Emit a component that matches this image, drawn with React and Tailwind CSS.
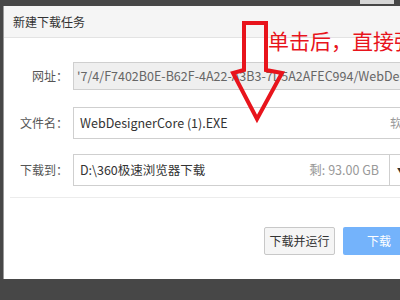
const FONT = { fontFamily: '"Noto Sans CJK SC", "Noto Sans", sans-serif' };

const Label = ({ children }) => (
  <div className="w-[64px] shrink-0 flex justify-end text-[12px] text-[#555]">
    <span>{children}</span>
    <span className="inline-block w-[12px]">：</span>
  </div>
);

const App = () => {
  return (
    <div className="relative w-[400px] h-[300px] overflow-hidden bg-[#474747]" style={FONT}>
      {/* strip of the window behind */}
      <div className="flex h-[6px]">
        <div className="ml-[360px] w-[34px] h-[4px] bg-[#d6d6d6]" />
      </div>

      {/* dialog */}
      <div className="ml-[3px] w-[440px] h-[273px] bg-white border-l border-[#9a9a9a] flex flex-col">
        <div className="h-[32px] shrink-0 bg-[#f5f5f5] border-b border-[#e3e3e3] flex items-center pl-[9px] text-[12px] text-[#333]">
          新建下载任务
        </div>

        <div className="flex flex-col pt-[24px]">
          <div className="flex items-center h-[28px]">
            <Label>网址</Label>
            <div className="ml-[5px] flex-1 h-[28px] border border-[#cfcfcf] bg-[#efefef] flex items-center pl-[3px] text-[12.5px] text-[#666] whitespace-nowrap overflow-hidden">
              '7/4/F7402B0E-B62F-4A22-A3B3-7D5A2AFEC994/WebDesignerCore (1).EXE
            </div>
          </div>

          <div className="flex items-center h-[32px] mt-[17px]">
            <Label>文件名</Label>
            <div className="ml-[5px] w-[360px] h-[32px] border border-[#cfcfcf] bg-white flex items-center pl-[6px] text-[12.5px] text-[#333] whitespace-nowrap">
              <span className="flex-1">WebDesignerCore (1).EXE</span>
              <span className="w-[42px] text-[12px] text-[#999]">软件</span>
            </div>
          </div>

          <div className="flex items-center h-[32px] mt-[15px]">
            <Label>下载到</Label>
            <div className="ml-[5px] w-[317px] h-[32px] border border-[#cfcfcf] bg-white flex items-center justify-between pl-[6px] pr-[10px] text-[12.5px] text-[#333] whitespace-nowrap">
              <span>D:\360极速浏览器下载</span>
              <span className="text-[#999]">剩: 93.00 GB</span>
            </div>
            <div className="w-[30px] h-[32px] border border-l-0 border-[#cfcfcf] flex items-center pl-[7px] text-[7px] text-[#333]">
              ▼
            </div>
          </div>

          <div className="ml-[6px] mt-[11px] border-t border-[#ececec]" />

          <div className="flex mt-[29px] ml-[260px] gap-[8px]">
            <button className="w-[71px] h-[28px] border border-[#c8c8c8] rounded-[2px] bg-[#f5f5f5] text-[12px] text-[#333]">
              下载并运行
            </button>
            <button className="w-[72px] h-[28px] rounded-[2px] bg-[#74b3fb] text-[12px] text-white">
              下载
            </button>
          </div>
        </div>
      </div>

      {/* annotation */}
      <div className="absolute left-[268px] top-[30px] text-[21px] leading-none text-[#e8141c] whitespace-nowrap">
        单击后<span className="inline-block w-[21px]">，</span>直接强制下载
      </div>
      <svg className="absolute left-0 top-0" width="400" height="300" viewBox="0 0 400 300">
        <polygon
          points="244,23 266,23 266,70 282,73 257,119 233,73 244,70"
          fill="none"
          stroke="#e8141c"
          strokeWidth="4"
          strokeLinejoin="miter"
        />
      </svg>
    </div>
  );
};

export default App;
